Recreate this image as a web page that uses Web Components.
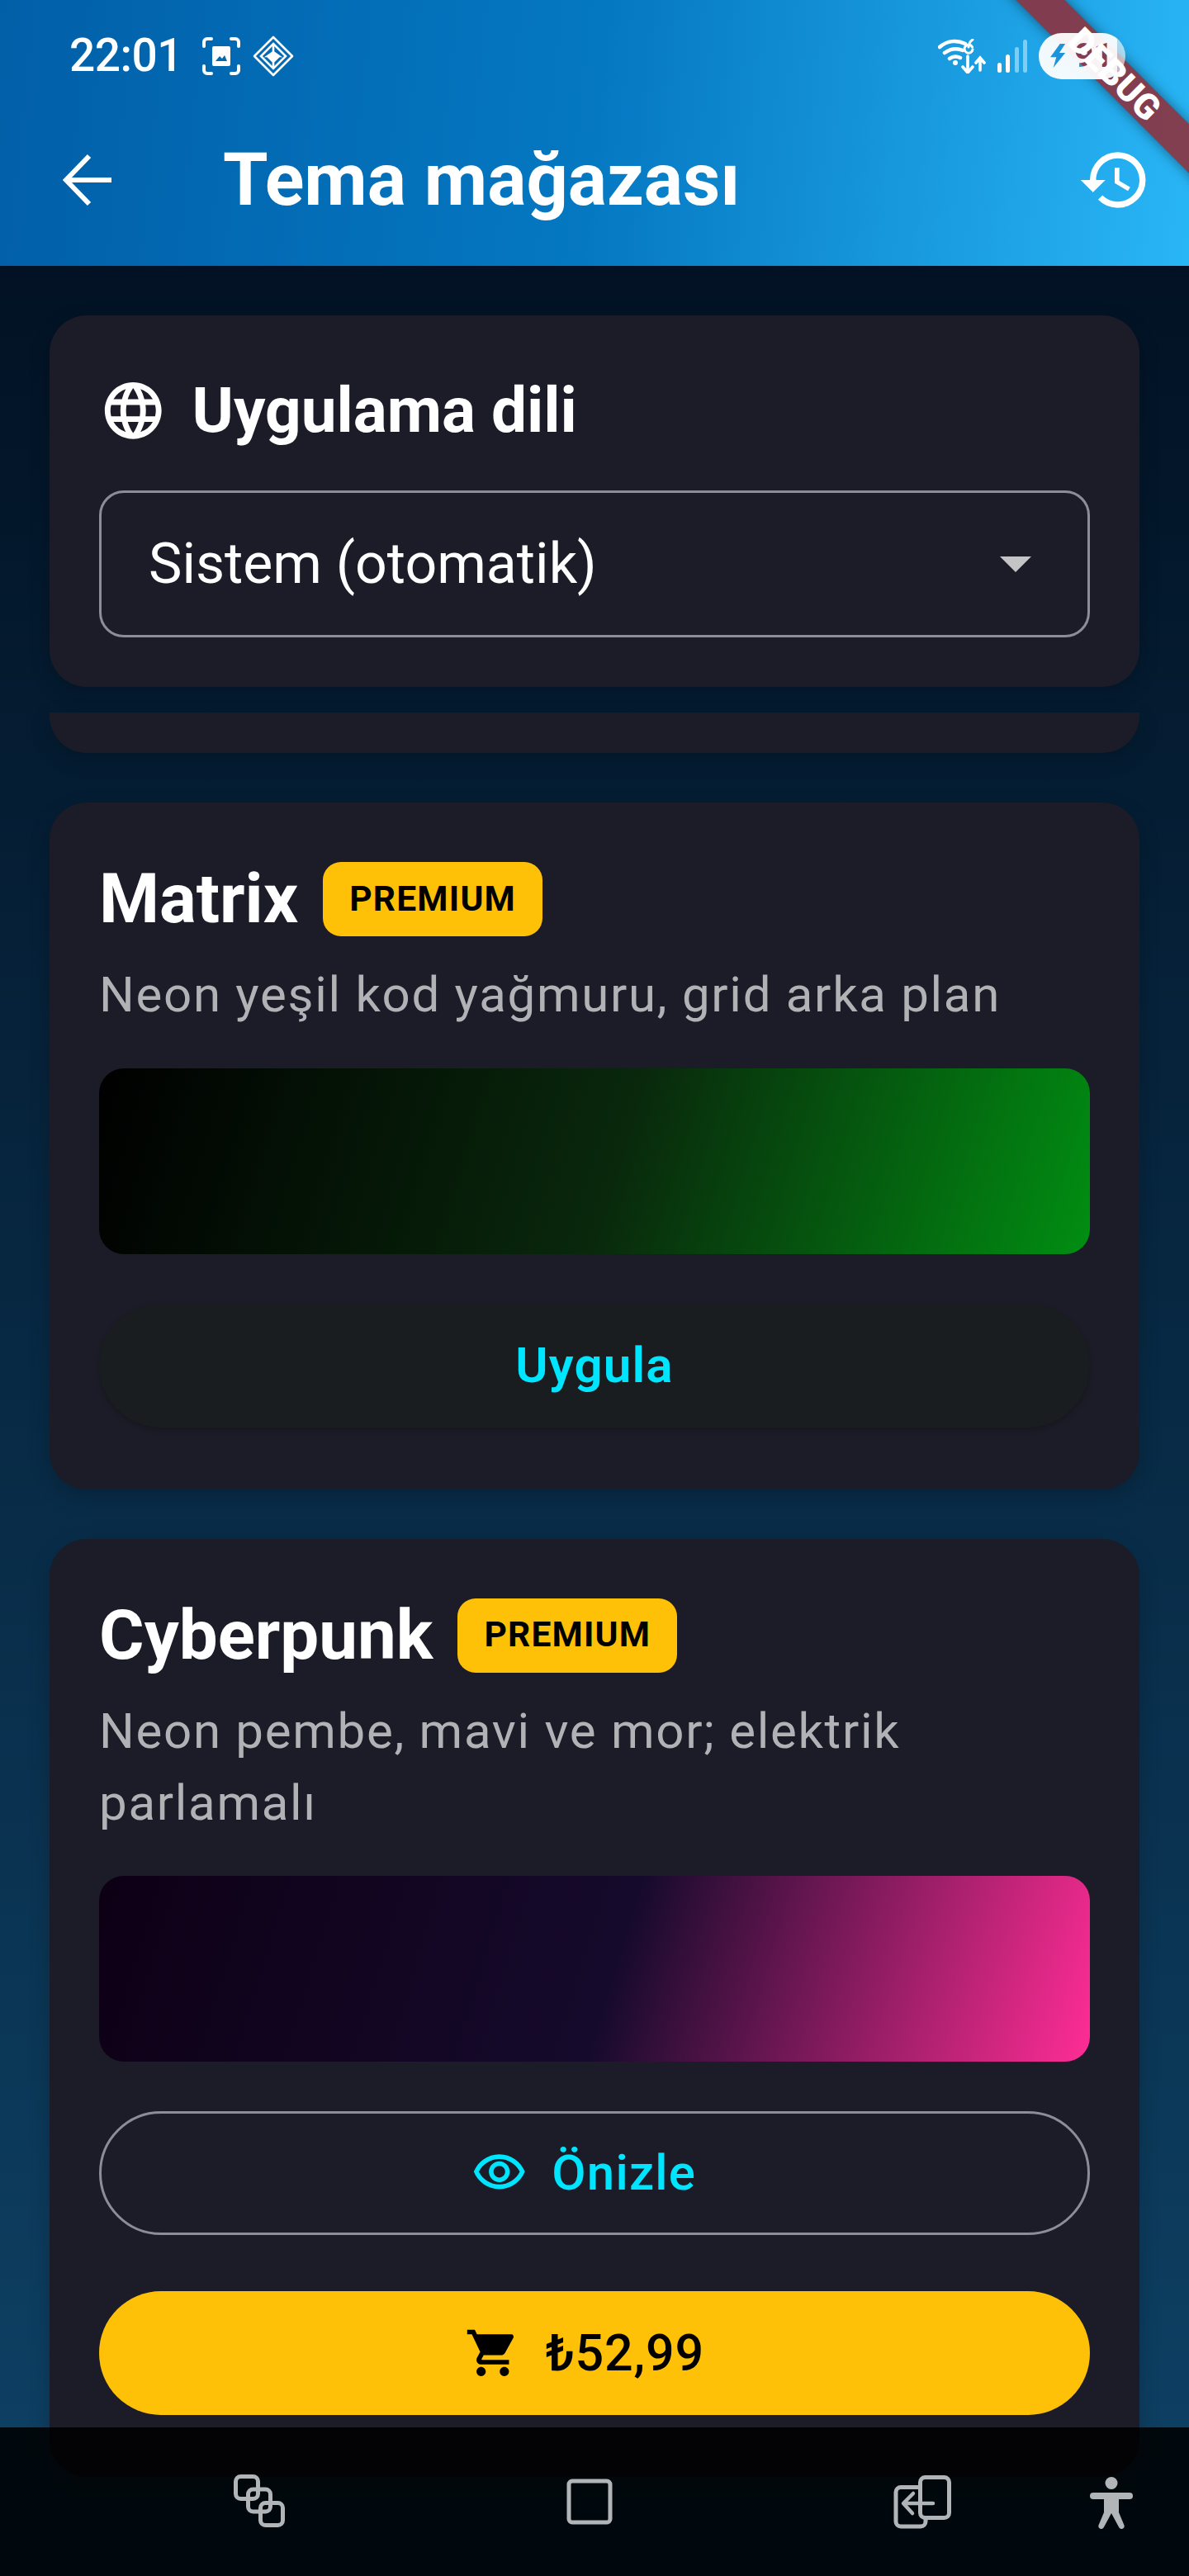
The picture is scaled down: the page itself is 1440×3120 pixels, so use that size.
<!DOCTYPE html>
<html lang="tr">
<head>
<meta charset="utf-8">
<title>Tema mağazası</title>
<style>
	html, body { margin: 0; padding: 0; background: #000; }
	body { width: 1440px; height: 3120px; overflow: hidden; font-family: Roboto, sans-serif; }
</style>
</head>
<body>
<store-page>
	<status-bar slot="top"></status-bar>
	<store-card>
		<language-picker label="Uygulama dili" value="Sistem (otomatik)"></language-picker>
	</store-card>
	<store-card sliver></store-card>
	<store-card>
		<theme-item name="Matrix" desc="Neon yeşil kod yağmuru, grid arka plan" colors="#000000, #09280c 52%, #018e12"></theme-item>
		<action-button kind="muted">Uygula</action-button>
	</store-card>
	<store-card>
		<theme-item name="Cyberpunk" desc="Neon pembe, mavi ve mor; elektrik parlamalı" colors="#0d0015, #160a2c 52%, #ff2d95"></theme-item>
		<action-button kind="outline" icon="eye">Önizle</action-button>
		<action-button kind="gold" icon="cart" gap="68">₺52,99</action-button>
	</store-card>
</store-page>
<script>
const html = String.raw;

const ICONS = {
	eye: html`<path d="M12 6c3.79 0 7.17 2.13 8.82 5.5C19.17 14.87 15.79 17 12 17s-7.17-2.13-8.82-5.5C4.83 8.13 8.21 6 12 6m0-2C7 4 2.73 7.11 1 11.5 2.73 15.89 7 19 12 19s9.27-3.11 11-7.5C21.27 7.11 17 4 12 4zm0 5c1.38 0 2.5 1.12 2.5 2.5S13.38 14 12 14s-2.5-1.12-2.5-2.5S10.62 9 12 9m0-2c-2.48 0-4.5 2.02-4.5 4.5S9.52 16 12 16s4.5-2.02 4.5-4.5S14.48 7 12 7z"/>`,
	cart: html`<path d="M7 18c-1.1 0-1.99.9-1.99 2S5.9 22 7 22s2-.9 2-2-.9-2-2-2zM1 2v2h2l3.6 7.59-1.35 2.45c-.16.28-.25.61-.25.96 0 1.1.9 2 2 2h12v-2H7.42c-.14 0-.25-.11-.25-.25l.03-.12.9-1.63h7.45c.75 0 1.41-.41 1.75-1.03l3.58-6.49A1 1 0 0 0 20 4H5.21l-.94-2H1zm16 16c-1.1 0-1.99.9-1.99 2s.89 2 1.99 2 2-.9 2-2-.9-2-2-2z"/>`,
	globe: html`<path d="M11.99 2C6.47 2 2 6.48 2 12s4.47 10 9.99 10C17.52 22 22 17.52 22 12S17.52 2 11.99 2zm6.93 6h-2.95a15.65 15.65 0 0 0-1.38-3.56A8.03 8.03 0 0 1 18.92 8zM12 4.04c.83 1.2 1.48 2.53 1.91 3.96h-3.82c.43-1.43 1.08-2.76 1.91-3.96zM4.26 14C4.1 13.36 4 12.69 4 12s.1-1.36.26-2h3.38c-.08.66-.14 1.32-.14 2s.06 1.34.14 2H4.26zm.82 2h2.95c.32 1.25.78 2.45 1.38 3.56A7.99 7.99 0 0 1 5.08 16zm2.95-8H5.08a7.99 7.99 0 0 1 4.33-3.56A15.65 15.65 0 0 0 8.03 8zM12 19.96c-.83-1.2-1.48-2.53-1.91-3.96h3.82c-.43 1.43-1.08 2.76-1.91 3.96zM14.34 14H9.66c-.09-.66-.16-1.32-.16-2s.07-1.35.16-2h4.68c.09.65.16 1.32.16 2s-.07 1.34-.16 2zm.25 5.56c.6-1.11 1.06-2.31 1.38-3.56h2.95a8.03 8.03 0 0 1-4.33 3.56zM16.36 14c.08-.66.14-1.32.14-2s-.06-1.34-.14-2h3.38c.16.64.26 1.31.26 2s-.1 1.36-.26 2h-3.38z"/>`,
};

function svgIcon(name, size, color) {
	return `<svg width="${size}" height="${size}" viewBox="0 0 24 24" fill="${color}">${ICONS[name]}</svg>`;
}

class StorePage extends HTMLElement {
	constructor() {
		super();
		const shadow = this.attachShadow({ mode: 'open' });
		shadow.innerHTML = html`
			<style>
				:host {
					display: flex;
					flex-direction: column;
					position: relative;
					width: 1440px;
					height: 3120px;
					overflow: hidden;
				}
				header {
					position: relative;
					flex: none;
					height: 322px;
					overflow: hidden;
					background: linear-gradient(96deg, #015fa8 0%, #0578c2 50%, #29b6f6 100%);
					display: flex;
					flex-direction: column;
				}
				::slotted(status-bar) { position: relative; z-index: 2; }
				.bar {
					flex: 1;
					display: flex;
					align-items: center;
					padding: 0 45px 21px 72px;
				}
				.bar h1 {
					flex: 1;
					margin: 0 0 0 134px;
					font: 700 88.2px/1 Roboto, sans-serif;
					color: #fff;
				}
				.band, .label {
					position: absolute;
					top: 69px;
					height: 42px;
					transform: rotate(45deg);
				}
				.band {
					left: 1150px;
					width: 400px;
					background: rgba(140, 50, 62, 0.9);
					box-shadow: 0 0 16px rgba(0, 0, 0, 0.45);
					z-index: 1;
				}
				.label {
					left: 1275px;
					width: 150px;
					z-index: 3;
					color: #fff;
					font: 900 43px/42px Roboto, sans-serif;
					text-align: center;
				}
				main {
					flex: 1;
					display: flex;
					flex-direction: column;
					padding: 60px 60px 0;
					background: linear-gradient(180deg, #021224 0%, #0e4266 100%);
				}
				nav {
					position: absolute;
					left: 0;
					right: 0;
					bottom: 0;
					height: 180px;
					background: rgba(0, 0, 0, 0.87);
				}
				nav svg { position: absolute; }
			</style>
			<header>
				<slot name="top"></slot>
				<div class="band"></div>
				<div class="label">DEBUG</div>
				<div class="bar">
					<svg width="64" height="64" viewBox="0 0 64 64" fill="none" stroke="#fff" stroke-width="6"><path d="M8 32H63M36 3 8 32l28 29"/></svg>
					<h1>Tema mağazası</h1>
					<svg width="90" height="90" viewBox="0 0 24 24" fill="#fff"><path d="M13 3a9 9 0 0 0-9 9H1l3.89 3.89.07.14L9 12H6c0-3.87 3.13-7 7-7s7 3.13 7 7-3.13 7-7 7c-1.93 0-3.68-.79-4.94-2.06l-1.42 1.42A8.954 8.954 0 0 0 13 21a9 9 0 0 0 0-18zm-1 5v5l4.28 2.54.72-1.21-3.5-2.08V8H12z"/></svg>
				</div>
			</header>
			<main><slot></slot></main>
			<nav>
				<svg style="left:282px;top:57px" width="64" height="66" viewBox="0 0 64 66" fill="none" stroke="#b1b5b8" stroke-width="5"><rect x="3.5" y="2.5" width="27" height="27" rx="6"/><rect x="18.5" y="18" width="27" height="27" rx="6"/><rect x="33.5" y="34.5" width="27" height="27" rx="6"/></svg>
				<svg style="left:686px;top:62px" width="56" height="56" viewBox="0 0 56 56" fill="none" stroke="#b1b5b8" stroke-width="5"><rect x="3" y="3" width="50" height="50" rx="4"/></svg>
				<svg style="left:1082px;top:58px" width="70" height="66" viewBox="0 0 70 66" fill="none" stroke="#b1b5b8" stroke-width="5" stroke-linecap="round" stroke-linejoin="round"><rect x="32.5" y="2.5" width="35" height="49" rx="6"/><path d="M30 14.5H9a6 6 0 0 0-6 6V56a6 6 0 0 0 6 6h24a6 6 0 0 0 6-6v-3"/><path d="M48 34H13M24 22 12 34l11 12" stroke-width="4.5"/></svg>
				<svg style="left:1320px;top:60px" width="52" height="66" viewBox="0 0 52 66" fill="#b1b5b8"><circle cx="26" cy="7.5" r="7.5"/><rect x="0" y="19" width="52" height="8" rx="4"/><path d="M17 24h18v19l6.5 15.5a3.4 3.4 0 0 1-6.2 2.7L26 44l-9.3 17.2a3.4 3.4 0 0 1-6.2-2.7L17 43z"/></svg>
			</nav>
		`;
	}
}

class StatusBar extends HTMLElement {
	constructor() {
		super();
		const shadow = this.attachShadow({ mode: 'open' });
		shadow.innerHTML = html`
			<style>
				:host {
					display: flex;
					align-items: center;
					flex: none;
					height: 135px;
					box-sizing: border-box;
					padding: 0 77px 0 84px;
					color: #fff;
				}
				.time { font: 500 55px/1 Roboto, sans-serif; margin-right: 9px; letter-spacing: -0.5px; }
				.left { flex: 1; display: flex; align-items: center; gap: 14px; }
				.right { display: flex; align-items: center; gap: 14px; }
				.battery {
					display: flex;
					align-items: center;
					gap: 9px;
					width: 105px;
					height: 56px;
					padding-left: 14px;
					box-sizing: border-box;
					border-radius: 28px;
					background: linear-gradient(to right, rgba(255, 255, 255, 0.94) 90.5%, rgba(255, 255, 255, 0.62) 90.5%);
				}
				.level {
					font: 700 41px/1 Roboto, sans-serif;
					color: #853c50;
					background: linear-gradient(45deg, #1b8fd6 21%, #853c50 21%);
					-webkit-background-clip: text;
					background-clip: text;
					-webkit-text-fill-color: transparent;
				}
			</style>
			<div class="left">
				<span class="time">22:01</span>
				<svg width="48" height="48" viewBox="0 0 48 48" fill="none" stroke="#fff" stroke-width="4" stroke-linecap="round"><path d="M3 12V7a4 4 0 0 1 4-4h5M36 3h5a4 4 0 0 1 4 4v5M45 36v5a4 4 0 0 1-4 4h-5M12 45H7a4 4 0 0 1-4-4v-5"/><path d="M15 14h18v20H15z" fill="#fff" stroke-linejoin="round"/><path d="M17 30l5-6 3 3 3-4 3 7z" fill="#0367b2" stroke="none"/></svg>
				<svg width="50" height="50" viewBox="0 0 50 50" fill="none" stroke="#fff" stroke-width="2.6"><path d="M25 2 48 25 25 48 2 25z" stroke-linejoin="round"/><path d="M25 10 40 25 25 40 10 25z"/><path d="M25 10v10l-7 5h14l-7-5M18 25l7 7 7-7M25 32v8" fill="#fff"/></svg>
			</div>
			<div class="right">
				<svg width="58" height="42" viewBox="0 0 58 42" fill="none" stroke="#fff" stroke-width="4.5" stroke-linecap="round"><path d="M2 10c9-8 21-9 31-4M8 17c7-5 15-6 22-3M14 24c4-3 9-3 13-1"/><circle cx="21" cy="29" r="3" fill="#fff" stroke="none"/><path d="M36 21v19m-6-6 6 7 6-7M51 38V24m-5 5 5-6 5 6" stroke-width="3.6"/><path d="M42 13a5 5 0 1 1-.5-3M37 10c0-4 2-7 5-9" stroke-width="3"/></svg>
				<svg width="36" height="40" viewBox="0 0 36 40"><rect x="0" y="28" width="5" height="12" rx="2.5" fill="#fff"/><rect x="10" y="18" width="5" height="22" rx="2.5" fill="#fff"/><rect x="21" y="9" width="5" height="31" rx="2.5" fill="#fff" fill-opacity=".45"/><rect x="31" y="0" width="5" height="40" rx="2.5" fill="#fff" fill-opacity=".45"/></svg>
				<div class="battery">
					<svg width="20" height="29" viewBox="0 0 22 32" fill="#1d93dc"><path d="M13 0 0 18h8L4 32l16-20h-8l8-12z"/></svg>
					<span class="level">91</span>
				</div>
			</div>
		`;
	}
}

class StoreCard extends HTMLElement {
	constructor() {
		super();
		const shadow = this.attachShadow({ mode: 'open' });
		shadow.innerHTML = html`
			<style>
				:host {
					display: block;
					flex: none;
					box-sizing: border-box;
					margin-bottom: 60px;
					padding: 60px;
					border-radius: 45px;
					background: #1c1c28;
					box-shadow: 0 8px 26px rgba(0, 0, 0, 0.2);
				}
				:host([sliver]) {
					height: 49px;
					padding: 0;
					border-radius: 0 0 45px 45px;
					margin-top: -29px;
				}
			</style>
			<slot></slot>
		`;
	}
}

class LanguagePicker extends HTMLElement {
	constructor() {
		super();
		const shadow = this.attachShadow({ mode: 'open' });
		shadow.innerHTML = html`
			<style>
				:host { display: block; }
				.head { display: flex; align-items: center; gap: 30px; height: 83px; margin: 14px 0 55px; }
				.head span { font: 700 76.5px/1 Roboto, sans-serif; color: #fff; }
				.box {
					display: flex;
					align-items: center;
					justify-content: space-between;
					height: 178px;
					box-sizing: border-box;
					padding: 0 68px 0 57px;
					border: 3.75px solid #8c8e97;
					border-radius: 30px;
				}
				.box span { font: 400 68px/1 Roboto, sans-serif; color: #fff; }
				.caret {
					width: 0;
					height: 0;
					border-left: 19px solid transparent;
					border-right: 19px solid transparent;
					border-top: 19px solid #c4c4c6;
				}
			</style>
			<div class="head">
				${svgIcon('globe', 82.5, '#fff')}
				<span>${this.getAttribute('label')}</span>
			</div>
			<div class="box">
				<span>${this.getAttribute('value')}</span>
				<div class="caret"></div>
			</div>
		`;
	}
}

class ThemeItem extends HTMLElement {
	constructor() {
		super();
		const shadow = this.attachShadow({ mode: 'open' });
		shadow.innerHTML = html`
			<style>
				:host { display: block; }
				.title { display: flex; align-items: center; gap: 30px; margin-top: 12px; height: 90px; }
				h2 { margin: 0; font: 700 83.5px/1 Roboto, sans-serif; color: #fff; }
				.badge {
					display: flex;
					align-items: center;
					height: 90px;
					box-sizing: border-box;
					padding: 0 32px;
					border-radius: 22px;
					background: #ffc107;
					color: #000;
					font: 700 42.5px/1 Roboto, sans-serif;
					letter-spacing: 1.2px;
				}
				p {
					margin: 27px 0 0;
					font: 400 60px/87px Roboto, sans-serif;
					color: #b1b1b6;
					letter-spacing: 1.7px;
				}
				.strip {
					height: 225px;
					margin-top: 45.5px;
					border-radius: 30px;
				}
			</style>
			<div class="title">
				<h2>${this.getAttribute('name')}</h2>
				<span class="badge">PREMIUM</span>
			</div>
			<p>${this.getAttribute('desc')}</p>
			<div class="strip" style="background: linear-gradient(107deg, ${this.getAttribute('colors')})"></div>
		`;
	}
}

class ActionButton extends HTMLElement {
	constructor() {
		super();
		const kind = this.getAttribute('kind');
		const icon = this.getAttribute('icon');
		const iconColor = kind === 'gold' ? '#000' : '#00e5ff';
		const shadow = this.attachShadow({ mode: 'open' });
		shadow.innerHTML = html`
			<style>
				:host {
					display: flex;
					align-items: center;
					justify-content: center;
					gap: 30px;
					height: 150px;
					margin-top: ${this.getAttribute('gap') || 60}px;
					margin-bottom: 15px;
					box-sizing: border-box;
					border-radius: 75px;
					font: 500 60px/1 Roboto, sans-serif;
					letter-spacing: 1.2px;
					color: #00e5ff;
				}
				:host([kind='muted']) { background: #191d20; font-weight: 600; box-shadow: 0 3px 6px rgba(0, 0, 0, 0.2); }
				:host([kind='outline']) { border: 3.75px solid #8c8e97; padding-right: 26px; margin-bottom: 0; }
				:host([kind='gold']) { background: #ffc107; color: #000; padding-right: 24px; letter-spacing: 0.8px; font-size: 61px; }
			</style>
			${icon ? svgIcon(icon, 67.5, iconColor) : ''}
			<slot></slot>
		`;
	}
}

customElements.define('store-page', StorePage);
customElements.define('status-bar', StatusBar);
customElements.define('store-card', StoreCard);
customElements.define('language-picker', LanguagePicker);
customElements.define('theme-item', ThemeItem);
customElements.define('action-button', ActionButton);
</script>
</body>
</html>
